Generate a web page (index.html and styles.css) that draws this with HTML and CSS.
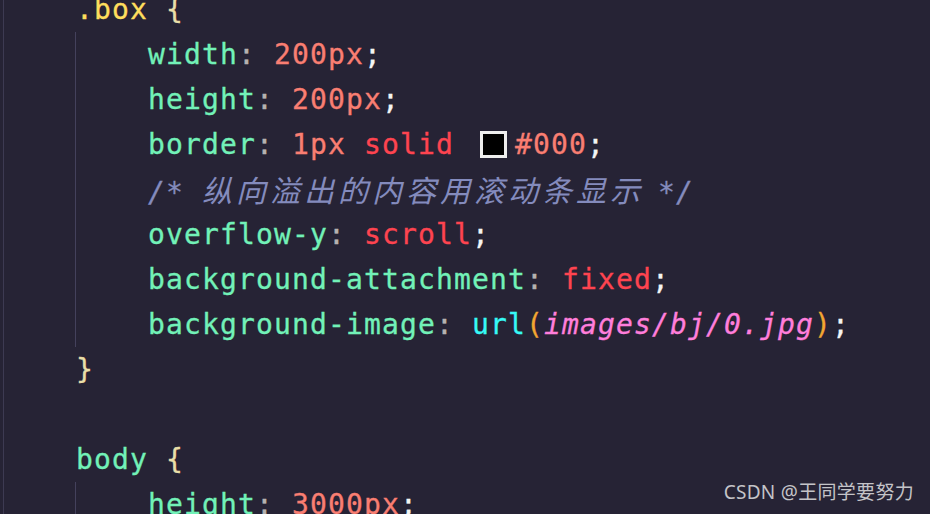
FILE: index.html
```html
<!DOCTYPE html>
<html lang="zh">
<head>
<meta charset="utf-8">
<title>code</title>
<link rel="stylesheet" href="styles.css">
</head>
<body>
<div class="editor">
  <div class="line sel"><span class="cls">.box</span> <span class="brace">{</span></div>
  <div class="block">
    <div class="line"><span class="prop">width</span><span class="colon">:</span> <span class="num">200px</span><span class="semi">;</span></div>
    <div class="line"><span class="prop">height</span><span class="colon">:</span> <span class="num">200px</span><span class="semi">;</span></div>
    <div class="line"><span class="prop">border</span><span class="colon">:</span> <span class="num">1px</span> <span class="kw">solid</span> <span class="swatch"></span><span class="num">#000</span><span class="semi">;</span></div>
    <div class="line"><span class="comment">/* <span class="cjk">纵向溢出的内容用滚动条显示</span> */</span></div>
    <div class="line"><span class="prop">overflow-y</span><span class="colon">:</span> <span class="kw">scroll</span><span class="semi">;</span></div>
    <div class="line"><span class="prop">background-attachment</span><span class="colon">:</span> <span class="kw">fixed</span><span class="semi">;</span></div>
    <div class="line"><span class="prop">background-image</span><span class="colon">:</span> <span class="fn">url</span><span class="paren">(</span><span class="str">images/bj/0.jpg</span><span class="paren">)</span><span class="semi">;</span></div>
  </div>
  <div class="line sel"><span class="brace">}</span></div>
  <div class="line sel"></div>
  <div class="line sel"><span class="tag">body</span> <span class="brace">{</span></div>
  <div class="block">
    <div class="line"><span class="prop">height</span><span class="colon">:</span> <span class="num">3000px</span><span class="semi">;</span></div>
  </div>
</div>
<div class="watermark">CSDN @王同学要努力</div>
</body>
</html>
```
FILE: styles.css
```css
html, body {
  margin: 0;
  height: 100%;
  overflow: hidden;
}
body {
  background: #262335;
  position: relative;
}
.editor {
  margin-left: 3px;
  border-left: 1px solid #3d3a52;
  margin-top: -13px;
  height: 600px;
  font-family: "DejaVu Sans Mono", "Liberation Mono", "Noto Sans CJK SC", monospace;
  font-size: 28px;
  letter-spacing: 1.14px;
  color: #ffffff;
  -webkit-text-stroke: 0.3px currentColor;
}
.line {
  height: 45px;
  line-height: 45px;
  white-space: pre;
}
.sel {
  padding-left: 72px;
}
.block {
  margin-left: 71px;
  border-left: 1px solid #44415c;
  padding-left: 72px;
}
.cls { color: #fede5d; }
.tag { color: #72f1b8; }
.brace { color: #e9dfa8; }
.prop { color: #72f1b8; }
.colon { color: #b6b1b1; }
.num { color: #f97e72; }
.kw { color: #fe4450; }
.semi { color: #f4f4f4; }
.fn { color: #36f9f6; }
.paren { color: #f2a631; }
.str { color: #ff7edb; font-style: italic; }
.comment { color: #848bbd; font-style: italic; }
.cjk {
  font-family: "Noto Sans CJK SC", sans-serif;
  font-size: 30px;
  letter-spacing: 4px;
  margin-right: -4px;
  -webkit-text-stroke: 0;
}
.swatch {
  display: inline-block;
  box-sizing: border-box;
  width: 27px;
  height: 27px;
  border: 3px solid #eeeeee;
  background: #000;
  margin: 0 8px 0 8px;
  vertical-align: -4px;
  -webkit-text-stroke: 0;
}
.watermark {
  position: absolute;
  right: 16px;
  bottom: 9px;
  font-family: "Noto Sans", "Noto Sans CJK SC", sans-serif;
  font-size: 19px;
  letter-spacing: 0.3px;
  color: #c4c4c8;
}
```
